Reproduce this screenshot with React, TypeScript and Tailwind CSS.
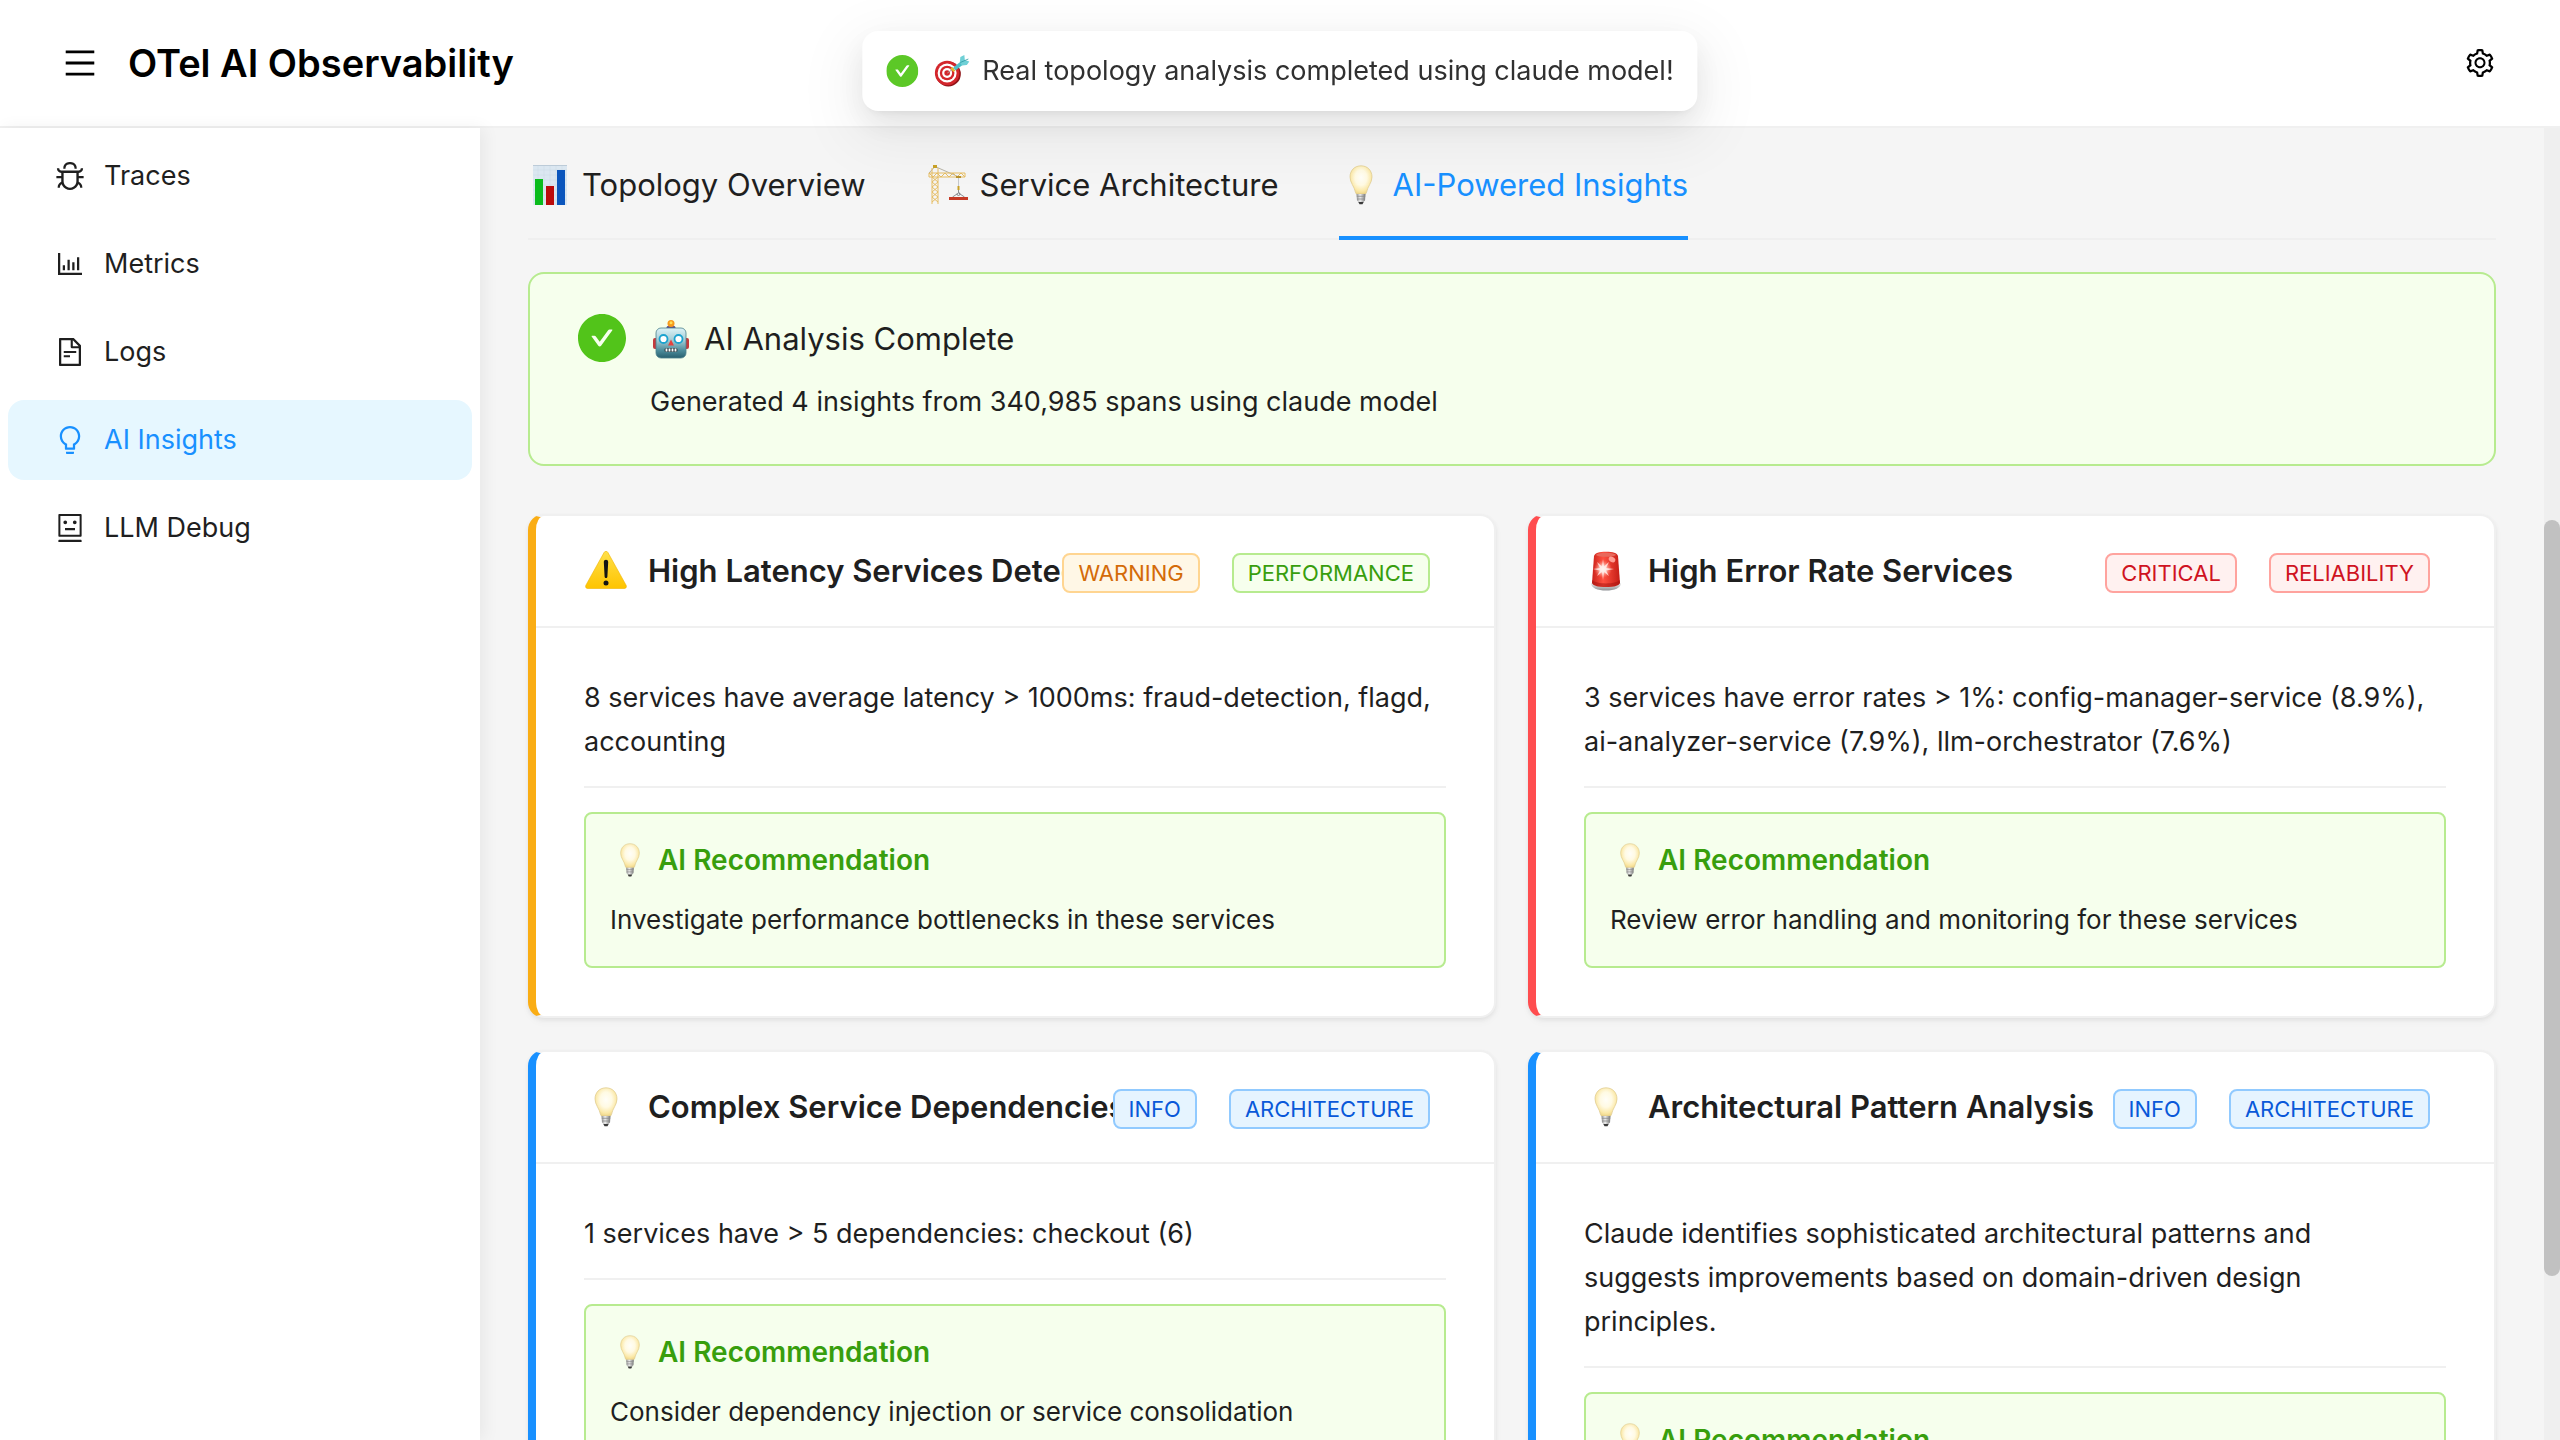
import type { ComponentType, ReactNode } from "react";
import {
  AiFillCheckCircle,
  AiOutlineBarChart,
  AiOutlineBug,
  AiOutlineBulb,
  AiOutlineFileText,
  AiOutlineMenu,
  AiOutlineSetting,
} from "react-icons/ai";

type IconProps = { className?: string; viewBox?: string };

// The outline glyphs carry a 64 unit margin; this view box trims it.
const TRIMMED = "64 64 896 896";

function RobotOutline({ className, viewBox }: IconProps) {
  return (
    <svg viewBox={viewBox ?? "0 0 1024 1024"} fill="currentColor" className={className} aria-hidden="true">
      <path d="M300 328a60 60 0 10120 0 60 60 0 10-120 0zM852 64H172c-17.700 0-32 14.300-32 32v660c0 17.700 14.300 32 32 32h680c17.700 0 32-14.300 32-32V96c0-17.700-14.300-32-32-32zm-32 660H204V128h616v596zM604 328a60 60 0 10120 0 60 60 0 10-120 0zm250.200 556H169.800c-16.500 0-29.800 14.300-29.800 32v36c0 4.400 3.300 8 7.400 8h729.100c4.100 0 7.400-3.600 7.400-8v-36c.1-17.700-13.200-32-29.700-32zM664 508H360c-4.400 0-8 3.600-8 8v60c0 4.400 3.600 8 8 8h304c4.400 0 8-3.600 8-8v-60c0-4.400-3.600-8-8-8z" />
    </svg>
  );
}

function Bulb({ className }: IconProps) {
  return (
    <svg viewBox="0 0 40 40" className={className} aria-hidden="true">
      <defs>
        <radialGradient id="bulbGlass" cx="50%" cy="42%" r="60%">
          <stop offset="0" stopColor="#fffef8" />
          <stop offset="0.45" stopColor="#fffae3" />
          <stop offset="0.8" stopColor="#fbe8a6" />
          <stop offset="1" stopColor="#ecd284" />
        </radialGradient>
        <linearGradient id="bulbBase" x1="0" x2="1" y1="0" y2="0">
          <stop offset="0" stopColor="#8e8e8e" />
          <stop offset="0.4" stopColor="#eeeeee" />
          <stop offset="1" stopColor="#777777" />
        </linearGradient>
      </defs>
      <path
        d="M20 .8c6.600 0 11 4.800 11 11.200 0 5.800-4.400 9.300-5.500 15.500-.2 1-.8 1.500-1.800 1.500h-7.400c-1 0-1.600-.5-1.800-1.500C13.400 21.300 9 17.800 9 12 9 5.600 13.400.8 20 .8z"
        fill="url(#bulbGlass)"
        stroke="#dcc88d"
        strokeWidth="0.700"
      />
      <path d="M15.500 29h9l-.5 6.500-1.700 1.500h-4.600L16 35.500z" fill="url(#bulbBase)" />
      <path d="M15.800 31.300h8.400M16 34h8" stroke="#8b8b8b" strokeWidth="0.800" />
      <path d="M17.300 37h5.400l-1.200 2.300h-3z" fill="#3a3a3a" />
    </svg>
  );
}

function ChartEmoji({ className }: IconProps) {
  return (
    <svg viewBox="0 0 40 40" className={className} aria-hidden="true">
      <rect x="3" y="0" width="34" height="40" fill="#dbe7f1" />
      <path d="M3 5h34M3 10h34M3 15h34M3 20h34M3 25h34M3 30h34M3 35h34M8 0v40M14 0v40M20 0v40M26 0v40M32 0v40" stroke="#cad8e5" strokeWidth="0.500" />
      <path d="M3 .5h34" stroke="#bccbd8" />
      <rect x="5" y="14" width="8" height="26" fill="#0abb1c" />
      <rect x="16" y="21" width="8" height="19" fill="#bb0b0b" />
      <rect x="27" y="5" width="8" height="35" fill="#0b56bd" />
    </svg>
  );
}

function CraneEmoji({ className }: IconProps) {
  return (
    <svg viewBox="0 0 40 40" className={className} aria-hidden="true">
      <path d="M1 8L7 1.500 31 12" fill="none" stroke="#9b9784" strokeWidth="0.700" />
      <rect x="5" y="0" width="4" height="3" fill="#c9a227" />
      <g fill="none" stroke="#e6bd63" strokeWidth="1">
        <path d="M4 3v36M10 3v36M1 8h36v4H1z" />
        <path d="M4 12l6 5-6 5 6 5-6 5 6 5M10 12l-6 5 6 5-6 5 6 5-6 5" />
        <path d="M1 8l4 4 4-4 4 4 4-4 4 4 4-4 4 4 4-4 4 4" />
      </g>
      <rect x="28" y="11" width="5" height="2" fill="#b8922e" />
      <path d="M30.500 13v9" stroke="#b9bcc0" strokeWidth="0.800" />
      <rect x="29.500" y="21" width="2" height="4" fill="#c9a227" />
      <path d="M30.500 25v2.500a1.500 1.500 0 11-1.500 1.200M30.500 28l-6 4M30.500 28l6 4" fill="none" stroke="#6f7378" strokeWidth="0.800" />
      <rect x="21" y="32" width="19" height="3" fill="#c63a26" />
    </svg>
  );
}

function RobotEmoji({ className }: IconProps) {
  return (
    <svg viewBox="0 0 40 40" className={className} aria-hidden="true">
      <defs>
        <linearGradient id="robotFace" x1="0" x2="0" y1="0" y2="1">
          <stop offset="0" stopColor="#dcf3f7" />
          <stop offset="0.400" stopColor="#a5cdd6" />
          <stop offset="0.750" stopColor="#4c8c9b" />
          <stop offset="1" stopColor="#27606f" />
        </linearGradient>
      </defs>
      <rect x="2" y="19" width="5" height="11" rx="2" fill="#c43a3c" />
      <rect x="33" y="19" width="5" height="11" rx="2" fill="#c43a3c" />
      <ellipse cx="20" cy="8.500" rx="4.500" ry="2" fill="#5c4c8c" />
      <circle cx="20" cy="4.500" r="3.500" fill="#f79a1c" />
      <circle cx="20" cy="3.800" r="1.500" fill="#ffdf55" />
      <rect x="5" y="9" width="30" height="30" rx="5" fill="url(#robotFace)" stroke="#4d808c" strokeWidth="0.800" />
      <circle cx="12.500" cy="20" r="4" fill="#ffffff" stroke="#1ba3cf" strokeWidth="1.800" />
      <circle cx="27.500" cy="20" r="4" fill="#ffffff" stroke="#1ba3cf" strokeWidth="1.800" />
      <path d="M20 20.500l3 6h-6z" fill="#e5423d" />
      <rect x="13.500" y="29" width="13" height="4" rx="1.500" fill="#2d4148" />
      <path d="M15.500 29.500v3M18.500 29.500v3M21.500 29.500v3M24.500 29.500v3" stroke="#ffffff" strokeWidth="1.800" />
    </svg>
  );
}

function DartEmoji({ className }: IconProps) {
  return (
    <svg viewBox="0 0 36 32" className={className} aria-hidden="true">
      <circle cx="14" cy="19" r="12.500" fill="#8e1418" />
      <circle cx="12.800" cy="18" r="12.300" fill="#d3262c" />
      <circle cx="12.800" cy="18" r="9.500" fill="#ffffff" />
      <circle cx="12.800" cy="18" r="7.300" fill="#d3262c" />
      <circle cx="12.800" cy="18" r="5" fill="#ffffff" />
      <circle cx="12.800" cy="18" r="2.800" fill="#d3262c" />
      <path d="M13 18l7-5" stroke="#a8a8a8" strokeWidth="1" />
      <path d="M18 12l3 3.500-2 1.500-3-3.500z" fill="#e3b52c" />
      <path d="M19 12.500l8-6.500 2.500 3-8.500 6.500z" fill="#4ebfc9" />
      <path d="M25.500 7l.5-5 4-2 .5 5 4.500 1.500-2.500 3.500-5 .5z" fill="#6fd0d6" />
      <path d="M26 7.500L34 4" stroke="#2b97a2" strokeWidth="0.800" />
    </svg>
  );
}

function WarningEmoji({ className }: IconProps) {
  return (
    <svg viewBox="0 0 44 40" className={className} aria-hidden="true">
      <defs>
        <linearGradient id="warnFill" x1="0" x2="0" y1="0" y2="1">
          <stop offset="0" stopColor="#ffe04a" />
          <stop offset="1" stopColor="#fec400" />
        </linearGradient>
      </defs>
      <path
        d="M20.200 1.300c.8-1.500 2.800-1.500 3.600 0l18.300 32.900c.8 1.500 0 3.300-1.800 3.300H3.700c-1.800 0-2.600-1.800-1.800-3.300z"
        fill="url(#warnFill)"
        stroke="#f0b400"
        strokeWidth="0.600"
      />
      <path d="M19.800 11c0-3 4.400-3 4.400 0l-.8 14.500c-.1 2-2.700 2-2.800 0z" fill="#141414" />
      <circle cx="22" cy="32" r="2.500" fill="#141414" />
    </svg>
  );
}

function SirenEmoji({ className }: IconProps) {
  return (
    <svg viewBox="0 0 40 40" className={className} aria-hidden="true">
      <defs>
        <linearGradient id="sirenRed" x1="0" x2="1" y1="0" y2="0">
          <stop offset="0" stopColor="#c9221a" />
          <stop offset="0.400" stopColor="#ff5040" />
          <stop offset="1" stopColor="#c41d16" />
        </linearGradient>
        <linearGradient id="sirenBase" x1="0" x2="0" y1="0" y2="1">
          <stop offset="0" stopColor="#f0f0f0" />
          <stop offset="1" stopColor="#8d9093" />
        </linearGradient>
        <radialGradient id="sirenGlow">
          <stop offset="0" stopColor="#ffffff" />
          <stop offset="0.350" stopColor="#ffd9d0" stopOpacity="0.900" />
          <stop offset="1" stopColor="#ff8070" stopOpacity="0" />
        </radialGradient>
      </defs>
      <path d="M5 32c0 5 6.500 7.500 15 7.500S35 37 35 32z" fill="url(#sirenBase)" />
      <path d="M8 5c1-3 5-4.200 12-4.200S31 2 32 5l2 27c-1.500 3-7 4-14 4S7.500 35 6 32z" fill="url(#sirenRed)" />
      <ellipse cx="20" cy="3.800" rx="10" ry="2" fill="#e8695c" />
      <path d="M6.200 29c4 4.500 23.600 4.500 27.600 0l.2 3c-1.500 3-7 4-14 4S7.500 35 6 32z" fill="#a3120d" opacity="0.500" />
      <ellipse cx="26" cy="8.500" rx="3.500" ry="2.500" fill="#ff9d93" transform="rotate(30 26 8.500)" />
      <circle cx="17" cy="18" r="9" fill="url(#sirenGlow)" />
      <path d="M17 8l1 7.500L23 11l-3 6 8 1-8 1.500 3 5.500-5-4-1 8-1-8-5 4 3-5.500L7 18l7-1-3-6 5 4.500z" fill="#fff1ed" opacity="0.800" />
    </svg>
  );
}

const navItems: { label: string; icon: ComponentType<IconProps>; active?: boolean }[] = [
  { label: "Traces", icon: AiOutlineBug },
  { label: "Metrics", icon: AiOutlineBarChart },
  { label: "Logs", icon: AiOutlineFileText },
  { label: "AI Insights", icon: AiOutlineBulb, active: true },
  { label: "LLM Debug", icon: RobotOutline },
];

const tabs: { label: string; icon: ComponentType<IconProps>; active?: boolean }[] = [
  { label: "Topology Overview", icon: ChartEmoji },
  { label: "Service Architecture", icon: CraneEmoji },
  { label: "AI-Powered Insights", icon: Bulb, active: true },
];

const tagTones = {
  orange: "border-[#ffd591] bg-[#fff7e6] text-[#d46b08]",
  green: "border-[#b7eb8f] bg-[#f6ffed] text-[#389e0d]",
  red: "border-[#ffa39e] bg-[#fff1f0] text-[#cf1322]",
  blue: "border-[#91caff] bg-[#e6f4ff] text-[#0958d9]",
};

type Insight = {
  title: string;
  icon: ComponentType<IconProps>;
  edge: string;
  tags: { text: string; tone: keyof typeof tagTones }[];
  body: string;
  recommendation: string;
};

const insights: Insight[] = [
  {
    title: "High Latency Services Detected",
    icon: WarningEmoji,
    edge: "border-l-[#faad14]",
    tags: [
      { text: "WARNING", tone: "orange" },
      { text: "PERFORMANCE", tone: "green" },
    ],
    body: "8 services have average latency > 1000ms: fraud-detection, flagd, accounting",
    recommendation: "Investigate performance bottlenecks in these services",
  },
  {
    title: "High Error Rate Services",
    icon: SirenEmoji,
    edge: "border-l-[#ff4d4f]",
    tags: [
      { text: "CRITICAL", tone: "red" },
      { text: "RELIABILITY", tone: "red" },
    ],
    body: "3 services have error rates > 1%: config-manager-service (8.9%), ai-analyzer-service (7.9%), llm-orchestrator (7.6%)",
    recommendation: "Review error handling and monitoring for these services",
  },
  {
    title: "Complex Service Dependencies",
    icon: Bulb,
    edge: "border-l-[#1890ff]",
    tags: [
      { text: "INFO", tone: "blue" },
      { text: "ARCHITECTURE", tone: "blue" },
    ],
    body: "1 services have > 5 dependencies: checkout (6)",
    recommendation: "Consider dependency injection or service consolidation",
  },
  {
    title: "Architectural Pattern Analysis",
    icon: Bulb,
    edge: "border-l-[#1890ff]",
    tags: [
      { text: "INFO", tone: "blue" },
      { text: "ARCHITECTURE", tone: "blue" },
    ],
    body: "Claude identifies sophisticated architectural patterns and\nsuggests improvements based on domain-driven design\nprinciples.",
    recommendation: "Implement bounded contexts for the core domains",
  },
];

function Tag({ tone, children }: { tone: keyof typeof tagTones; children: ReactNode }) {
  return (
    <span className={`flex h-10 items-center rounded-lg border-2 px-3.5 text-[22px] ${tagTones[tone]}`}>
      {children}
    </span>
  );
}

function InsightCard({ insight }: { insight: Insight }) {
  const Icon = insight.icon;
  return (
    <article
      className={`min-w-0 rounded-2xl border-2 border-l-8 border-[#f0f0f0] bg-white shadow-[0_2px_4px_rgba(0,0,0,0.06),0_4px_8px_rgba(0,0,0,0.03)] ${insight.edge}`}
    >
      <header className="flex h-28 items-center border-b-2 border-[#f0f0f0] px-12">
        <h2 className="flex min-w-0 flex-1 items-center gap-5 overflow-hidden text-[31px] leading-[50px] font-semibold whitespace-nowrap">
          <Icon className="h-10 w-11 shrink-0" />
          <span>{insight.title}</span>
        </h2>
        <div className="flex shrink-0 gap-8 pt-1 pr-4">
          {insight.tags.map((tag) => (
            <Tag key={tag.text} tone={tag.tone}>
              {tag.text}
            </Tag>
          ))}
        </div>
      </header>
      <div className="p-12">
        <p className="leading-11 whitespace-pre-line">{insight.body}</p>
        <hr className="mt-[22px] mb-6 border-t-2 border-[#f0f0f0]" />
        <section className="rounded-lg border-2 border-[#b7eb8f] bg-[#f6ffed] p-6">
          <h3 className="flex items-center gap-2 text-[28px] leading-11 font-semibold text-[#389e0d]">
            <Bulb className="h-[34px] w-10" />
            AI Recommendation
          </h3>
          <p className="mt-4 text-[26px] leading-11">{insight.recommendation}</p>
        </section>
      </div>
    </article>
  );
}

export default function App() {
  return (
    <div className="flex h-screen flex-col overflow-hidden bg-[#f5f5f5] font-['Inter','Liberation_Sans',sans-serif] text-[27px] text-[#1f1f1f]">
      <header className="flex h-32 shrink-0 items-center justify-between border-b-2 border-[#f0f0f0] bg-white px-16 text-black">
        <div className="flex items-center gap-8">
          <button type="button" aria-label="Toggle navigation">
            <AiOutlineMenu viewBox={TRIMMED} className="size-8" />
          </button>
          <h1 className="text-[38px] leading-[56px] font-semibold">OTel AI Observability</h1>
        </div>
        <button type="button" aria-label="Settings" className="p-0.5">
          <AiOutlineSetting viewBox={TRIMMED} className="size-7" />
        </button>
      </header>

      <div className="flex min-h-0 flex-1">
        <nav className="z-10 flex w-[480px] shrink-0 flex-col gap-2 bg-white p-2 shadow-[4px_0_16px_rgba(0,0,0,0.06)]">
          {navItems.map(({ label, icon: Icon, active }) => (
            <a
              key={label}
              href="#"
              aria-current={active ? "page" : undefined}
              className={`flex h-20 items-center gap-5 rounded-2xl px-12 ${active ? "bg-[#e6f7ff] text-[#1890ff]" : ""}`}
            >
              <Icon viewBox={TRIMMED} className="size-7" />
              {label}
            </a>
          ))}
        </nav>

        <main className="min-w-0 flex-1 overflow-hidden px-12">
          <div role="tablist" className="flex h-28 gap-15 border-b-2 border-[#efefef] text-[31px]">
            {tabs.map(({ label, icon: Icon, active }) => (
              <button
                key={label}
                type="button"
                role="tab"
                aria-selected={!!active}
                className={`-mb-0.5 flex items-center gap-2.5 border-b-4 pt-1.5 ${active ? "border-[#1890ff] text-[#1890ff]" : "border-transparent"}`}
              >
                <Icon className="h-10 w-11" />
                {label}
              </button>
            ))}
          </div>

          <div role="status" className="mt-8 flex gap-6 rounded-2xl border-2 border-[#b7eb8f] bg-[#f6ffed] px-12 py-10">
            <AiFillCheckCircle viewBox={TRIMMED} className="size-12 shrink-0 text-[#52c41a]" />
            <div>
              <div className="flex items-center gap-3 text-[31px] leading-[50px]">
                <RobotEmoji className="h-10 w-[42px]" />
                AI Analysis Complete
              </div>
              <p className="mt-4 leading-11">Generated 4 insights from 340,985 spans using claude model</p>
            </div>
          </div>

          <div className="mt-12 grid grid-cols-2 gap-8">
            {insights.map((insight) => (
              <InsightCard key={insight.title} insight={insight} />
            ))}
          </div>
        </main>

        <div aria-hidden="true" className="flex w-4 shrink-0 flex-col bg-[#efefef]">
          <div className="grow-[392]" />
          <div className="grow-[756] rounded-full bg-[#c1c1c1]" />
          <div className="grow-[164]" />
        </div>
      </div>

      <div
        role="alert"
        className="fixed top-[31px] left-1/2 z-20 flex h-20 -translate-x-1/2 items-center gap-4 rounded-2xl bg-white px-6 whitespace-nowrap text-[#303030] shadow-[0_12px_32px_rgba(0,0,0,0.08),0_6px_12px_-8px_rgba(0,0,0,0.12),0_18px_56px_16px_rgba(0,0,0,0.05)]"
      >
        <AiFillCheckCircle viewBox={TRIMMED} className="size-8 text-[#5cc827]" />
        <span className="flex items-center gap-3">
          <DartEmoji className="h-8 w-9" />
          Real topology analysis completed using claude model!
        </span>
      </div>
    </div>
  );
}
